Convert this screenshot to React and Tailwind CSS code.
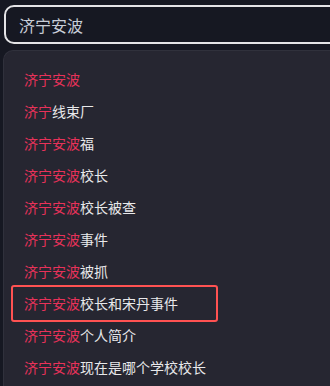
import React from 'react';

const query = '济宁安波';

const suggestions = [
  { hit: '济宁安波', rest: '' },
  { hit: '济宁', rest: '线束厂' },
  { hit: '济宁安波', rest: '福' },
  { hit: '济宁安波', rest: '校长' },
  { hit: '济宁安波', rest: '校长被查' },
  { hit: '济宁安波', rest: '事件' },
  { hit: '济宁安波', rest: '被抓' },
  { hit: '济宁安波', rest: '校长和宋丹事件', marked: true },
  { hit: '济宁安波', rest: '个人简介' },
  { hit: '济宁安波', rest: '现在是哪个学校校长' },
];

export default function App() {
  return (
    <div
      className="w-[330px] h-[386px] overflow-hidden bg-[#161822] pt-[5px] pl-[4px]"
      style={{ fontFamily: '"Noto Sans CJK SC", "Noto Sans", sans-serif' }}
    >
      {/* search box */}
      <div className="w-[340px] h-[39px] border-2 border-[#e4e4e6] rounded-[10px] flex items-center pl-[13px]">
        <span className="text-[16px] text-[#c8ced8] leading-none">{query}</span>
      </div>

      {/* suggestions */}
      <div className="mt-[6px] -ml-px w-[340px] h-[400px] bg-[#262631] border-t border-l border-[#30313c] rounded-tl-[10px] pt-[12px] pl-[20px]">
        {suggestions.map((s, i) => (
          <div key={i} className="relative h-8 flex items-center text-[14px] leading-none">
            <span className="text-[#e8325a]">{s.hit}</span>
            <span className="text-[#e8e8ea]">{s.rest}</span>
            {s.marked && (
              <div className="absolute left-[-13px] top-[-2px] w-[207px] h-[37px] border-2 border-[#ff5252] rounded-[3px] pointer-events-none" />
            )}
          </div>
        ))}
      </div>
    </div>
  );
}
